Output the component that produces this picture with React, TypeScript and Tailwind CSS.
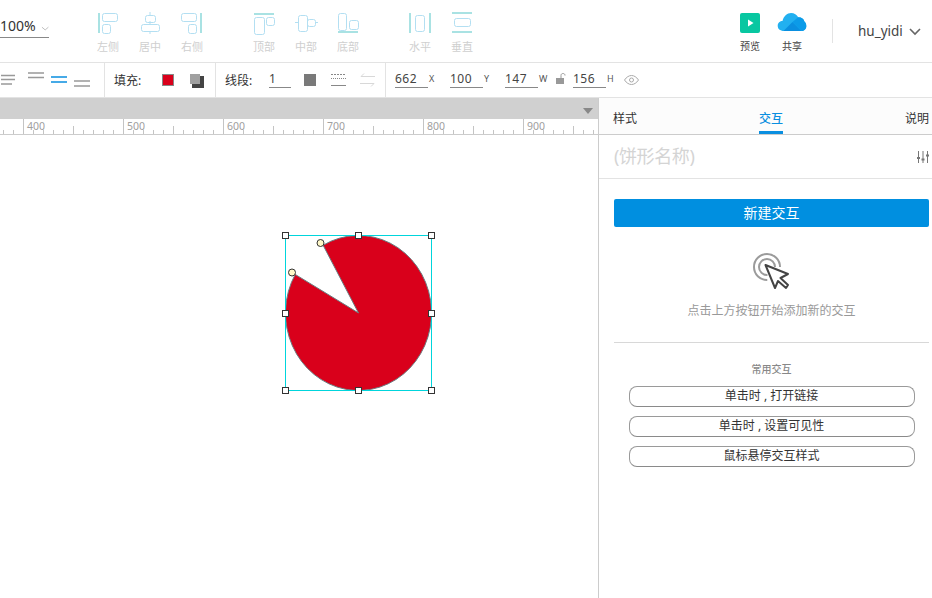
import React from "react";

const font = { fontFamily: '"Noto Sans", "Noto Sans CJK SC", sans-serif' };
const T = "#a9e2e3";
const B = "#b3dff2";

function AlignItem({ label, children, className = "" }: { label: string; children: React.ReactNode; className?: string }) {
  return (
    <div className={"w-[42px] flex flex-col items-center pt-[11px] " + className}>
      <svg width="24" height="24" viewBox="0 0 24 24" fill="none" stroke={B} strokeWidth="1">
        {children}
      </svg>
      <span className="mt-[5px] text-[11px] leading-[14px] text-[#cfcfcf]">{label}</span>
    </div>
  );
}

function Bar(p: { x: number; y: number; w: number; h: number }) {
  return <rect x={p.x} y={p.y} width={p.w} height={p.h} fill={T} stroke="none" />;
}
function R(p: { x: number; y: number; w: number; h: number }) {
  return <rect x={p.x + 0.5} y={p.y + 0.5} width={p.w} height={p.h} rx="2" />;
}

function Coord({ v, l, w = "w-[55px]" }: { v: string; l: string; w?: string }) {
  return (
    <div className={"flex items-start " + w}>
      <span className="w-[33px] h-[21px] border-b border-[#888] text-[12px] leading-[24px] text-[#444] tracking-[0.5px]">{v}</span>
      <span className="ml-[1px] text-[9px] leading-[24px] text-[#555]">{l}</span>
    </div>
  );
}

function Ruler() {
  const ticks: React.ReactNode[] = [];
  for (let i = 0; i <= 60; i++) {
    const x = 3.5 + i * 10;
    const n = i % 10 === 2;
    const m = i % 5 === 2;
    const h = n ? 15 : m ? 8 : 4;
    ticks.push(<line key={i} x1={x} x2={x} y1={15 - h} y2={15} stroke="#c4c4c4" />);
  }
  const labels = [400, 500, 600, 700, 800, 900];
  return (
    <svg width="598" height="16" className="block border-b border-[#cccccc]" style={{ boxSizing: "content-box", height: 15 }}>
      {ticks}
      {labels.map((v, i) => (
        <text key={v} x={27 + i * 100} y={11} fontSize="10.5" fill="#a0a0a0" fontFamily="Noto Sans">
          {v}
        </text>
      ))}
    </svg>
  );
}

function Handle({ x, y }: { x: number; y: number }) {
  return <rect x={x - 3} y={y - 3} width="6" height="6" fill="#fff" stroke="#333" />;
}

function Pill({ children }: { children: React.ReactNode }) {
  return (
    <div className="h-[21px] w-[286px] rounded-[8px] border border-[#9a9a9a] border-b-[#8a8a8a] text-center text-[12px] leading-[18px] text-[#333]">
      {children}
    </div>
  );
}

export default function App() {
  return (
    <div className="w-[932px] h-[598px] overflow-hidden bg-white flex flex-col" style={font}>
      {/* top toolbar */}
      <div className="h-[63px] shrink-0 border-b border-[#e3e3e3] flex">
        <div className="w-[87px] shrink-0 pt-[16px]">
          <div className="w-[49px] h-[22px] border-b border-[#888] flex text-[14px] leading-[20px] text-[#333]">
            100%
            <svg width="9" height="6" viewBox="0 0 9 6" className="ml-[5px] mt-[10px]" fill="none" stroke="#bbb">
              <path d="M1 1l3.5 3L8 1" />
            </svg>
          </div>
        </div>
        <AlignItem label="左侧">
          <Bar x={2} y={2} w={2} h={20} />
          <R x={6} y={2} w={15} h={8} />
          <R x={6} y={13} w={8} h={9} />
        </AlignItem>
        <AlignItem label="居中">
          <path d="M12 1v4M12 10v3M12 20v3" />
          <R x={7} y={4} w={10} h={7} />
          <R x={3} y={13} w={18} h={7} />
        </AlignItem>
        <AlignItem label="右侧" className="mr-[30px]">
          <R x={1} y={2} w={15} h={8} />
          <R x={8} y={13} w={8} h={9} />
          <Bar x={20} y={2} w={2} h={20} />
        </AlignItem>
        <AlignItem label="顶部">
          <Bar x={2} y={2} w={20} h={2} />
          <R x={2} y={6} w={10} h={17} />
          <R x={14} y={6} w={8} h={8} />
        </AlignItem>
        <AlignItem label="中部">
          <path d="M1 11.5h3M22 11.5h2M13 11.5h1" />
          <R x={4} y={4} w={9} h={16} />
          <R x={13} y={8} w={8} h={7} />
        </AlignItem>
        <AlignItem label="底部" className="mr-[30px]">
          <R x={2} y={2} w={8} h={17} />
          <R x={13} y={9} w={9} h={9} />
          <Bar x={2} y={20} w={20} h={2} />
        </AlignItem>
        <AlignItem label="水平">
          <Bar x={1} y={2} w={2} h={20} />
          <Bar x={21} y={2} w={2} h={20} />
          <R x={7} y={4} w={9} h={16} />
        </AlignItem>
        <AlignItem label="垂直">
          <Bar x={2} y={1} w={20} h={2} />
          <Bar x={2} y={20} w={20} h={2} />
          <R x={4} y={7} w={16} h={8} />
        </AlignItem>

        <div className="w-[246px] shrink-0" />

        <div className="w-[42px] flex flex-col items-center pt-[13px] shrink-0">
          <svg width="20" height="20" viewBox="0 0 20 20">
            <rect width="20" height="20" rx="2" fill="#08c7a1" />
            <path d="M8 6.5l5.5 3.5L8 13.5z" fill="#fff" />
          </svg>
          <span className="mt-[6px] text-[10px] leading-[14px] text-[#444]">预览</span>
        </div>
        <div className="w-[42px] flex flex-col items-center pt-[13px] shrink-0">
          <svg width="30" height="20" viewBox="0 0 30 21">
            <path d="M7 19C2 19 0 16.5 0 13.5 0 10.5 2.5 8.5 5 8.5 6 3.5 10 0 14 0c3.500 0 6 2 7.500 4.500 4 0 6 2 6.500 4.500 1.500 1 2 3 2 5 0 3-2.500 5-5 5z" fill="#22b0f0" />
            <path d="M6 19L15.500 9.500 25 19z" fill="#0a8fe0" />
            <path d="M15.500 9.500L21.500 4.500C25 4.500 27.500 6.500 28 9 29.500 10 30 12 30 14 30 17 27.500 19 25 19z" fill="#0c9be8" />
          </svg>
          <span className="mt-[6px] text-[10px] leading-[14px] text-[#444]">共享</span>
        </div>
        <div className="ml-[19px] mt-[19px] h-[24px] w-px bg-[#e3e3e3] shrink-0" />
        <div className="ml-[25px] mt-[21px] flex items-start shrink-0">
          <span className="text-[13.5px] leading-[20px] text-[#444]">hu_yidi</span>
          <svg width="12" height="8" viewBox="0 0 12 8" className="ml-[6px] mt-[7px]" fill="none" stroke="#666" strokeWidth="1.6">
            <path d="M1 1l5 5 5-5" />
          </svg>
        </div>
      </div>

      {/* property bar */}
      <div className="h-[35px] shrink-0 border-b border-[#e3e3e3] flex">
        <div className="w-[105px] shrink-0 border-r border-[#e3e3e3]">
          <svg width="104" height="34" viewBox="0 0 104 34">
            <path d="M1 12.500h14M1 16.500h14M1 21h11" stroke="#999" strokeWidth="1.700" />
            <path d="M28 10h16M28 14.500h16" stroke="#999" strokeWidth="1.700" />
            <path d="M51 14h16M51 19h16" stroke="#0a8fe0" strokeWidth="1.700" />
            <path d="M74 18h16M74 23h16" stroke="#999" strokeWidth="1.700" />
          </svg>
        </div>
        <div className="w-[111px] shrink-0 border-r border-[#e3e3e3] flex pl-[9px]">
          <span className="text-[12px] leading-[35px] text-[#333] w-[48px]">填充:</span>
          <span className="mt-[11px] w-[12px] h-[12px] bg-[#d9001b] border border-[#888]" />
          <svg width="14" height="14" viewBox="0 0 14 14" className="ml-[16px] mt-[11px]">
            <rect x="2" y="2" width="12" height="12" fill="#444" />
            <rect x="0" y="0" width="10" height="10" fill="#a0a0a0" />
          </svg>
        </div>
        <div className="w-[170px] shrink-0 border-r border-[#e3e3e3] flex pl-[9px]">
          <span className="text-[12px] leading-[35px] text-[#333] w-[44px]">线段:</span>
          <span className="mt-[4px] w-[22px] h-[21px] border-b border-[#888] text-[12px] leading-[24px] text-[#444]">1</span>
          <span className="ml-[13px] mt-[11px] w-[12px] h-[12px] bg-[#797979]" />
          <svg width="15" height="14" viewBox="0 0 15 14" className="ml-[15px] mt-[10px]" fill="none" stroke="#888">
            <path d="M0 1.500h15" strokeDasharray="2 1" />
            <path d="M0 5.500h15" strokeDasharray="1 1" />
            <path d="M0 12.500h15" />
          </svg>
          <svg width="15" height="14" viewBox="0 0 15 14" className="ml-[14px] mt-[10px]" fill="none" stroke="#d8d8d8">
            <path d="M15 3.500H1l3-3M0 10.500h14l-3 3" />
          </svg>
        </div>
        <div className="flex pl-[9px] pt-[4px]">
          <Coord v="662" l="X" />
          <Coord v="100" l="Y" />
          <Coord v="147" l="W" w="w-[51px]" />
          <svg width="10" height="11" viewBox="0 0 10 11" className="mt-[6px] mr-[7px]">
            <rect x="0" y="5" width="8" height="6" fill="#999" />
            <path d="M5 5V2.500C5 1 6 .5 7 .5S9 1 9 2.500" fill="none" stroke="#999" />
          </svg>
          <Coord v="156" l="H" w="w-[51px]" />
          <svg width="15" height="10" viewBox="0 0 15 10" className="mt-[8px]" fill="none" stroke="#aaa">
            <path d="M.5 5C2.500 2 5 .5 7.500 .5S12.500 2 14.500 5C12.500 8 10 9.500 7.500 9.500S2.500 8 .5 5z" />
            <circle cx="7.500" cy="5" r="2" />
          </svg>
        </div>
      </div>

      {/* main */}
      <div className="flex-1 flex min-h-0">
        {/* canvas column */}
        <div className="w-[598px] shrink-0 flex flex-col">
          <div className="h-[21px] shrink-0 bg-[#d0d0d0] flex justify-end pr-[5px] pt-[10px]">
            <svg width="10" height="6" viewBox="0 0 10 6">
              <path d="M0 0h10L5 6z" fill="#888" />
            </svg>
          </div>
          <Ruler />
          <div className="relative flex-1">
            <svg width="598" height="463" className="absolute left-0 top-0">
              <g transform="translate(0,-135)">
                <path
                  d="M358.500 313L323.100 245.200A73 77.500 0 1 1 295.200 274.400Z"
                  fill="#d9001b"
                  stroke="#6b7b80"
                  strokeWidth="1"
                  strokeLinejoin="round"
                />
                <rect x="285.500" y="235.500" width="146" height="155" fill="none" stroke="#00d5dc" />
                <Handle x={285.500} y={235.500} />
                <Handle x={358.500} y={235.500} />
                <Handle x={431.500} y={235.500} />
                <Handle x={285.500} y={313.500} />
                <Handle x={431.500} y={313.500} />
                <Handle x={285.500} y={390.500} />
                <Handle x={358.500} y={390.500} />
                <Handle x={431.500} y={390.500} />
                <circle cx="320.500" cy="243" r="3.500" fill="#fff8c8" stroke="#333" />
                <circle cx="292" cy="272.500" r="3.500" fill="#fff8c8" stroke="#333" />
              </g>
            </svg>
          </div>
        </div>

        {/* right panel */}
        <div className="flex-1 border-l border-[#cccccc] flex flex-col">
          <div className="h-[37px] shrink-0 bg-[#fcfcfc] border-b border-[#cccccc] flex justify-between pl-[14px] pr-[3px] text-[12px] leading-[42px] text-[#333]">
            <span>样式</span>
            <span className="h-[36px] border-b-[3px] border-[#0a8fe0] text-[#0a8fe0] font-medium">交互</span>
            <span>说明</span>
          </div>
          <div className="h-[44px] shrink-0 border-b border-[#e3e3e3] flex items-center justify-between pl-[15px] pr-[3px]">
            <span className="text-[18px] text-[#d4d4d4] tracking-[-0.4px]">(饼形名称)</span>
            <svg width="12" height="12" viewBox="0 0 12 12" fill="none" stroke="#777">
              <path d="M1.500 0v12M6 0v12M10.500 0v12" />
              <path d="M0 7h3M4.500 8.500h3M9 4.500h3" strokeWidth="2" />
            </svg>
          </div>
          <div className="flex-1 flex flex-col pl-[15px] pr-[3px]">
            <div className="mt-[20px] h-[28px] rounded-[2px] bg-[#008fe0] text-center text-[14px] leading-[28px] text-white">新建交互</div>
            <svg width="40" height="40" viewBox="0 0 40 40" className="mt-[23px] ml-[137px]" fill="none">
              <circle cx="16" cy="17" r="13" stroke="#9b9b9b" strokeWidth="2" strokeDasharray="62 20" strokeDashoffset="-20" />
              <circle cx="16" cy="17" r="8" stroke="#9b9b9b" strokeWidth="2" strokeDasharray="38 12" strokeDashoffset="-12" />
              <path d="M14.500 15L37 24 29.500 28 37 35 35 38 27 31 24 38Z" fill="#fff" stroke="#444" strokeWidth="2" strokeLinejoin="round" />
            </svg>
            <div className="mt-[12px] text-center text-[12px] leading-[18px] text-[#999]">点击上方按钮开始添加新的交互</div>
            <div className="mt-[22px] h-px bg-[#d8d8d8]" />
            <div className="mt-[19px] text-center text-[10px] leading-[14px] font-medium text-[#888]">常用交互</div>
            <div className="mt-[10px] flex flex-col gap-[9px] items-center">
              <Pill>单击时 , 打开链接</Pill>
              <Pill>单击时 , 设置可见性</Pill>
              <Pill>鼠标悬停交互样式</Pill>
            </div>
          </div>
        </div>
      </div>
    </div>
  );
}
